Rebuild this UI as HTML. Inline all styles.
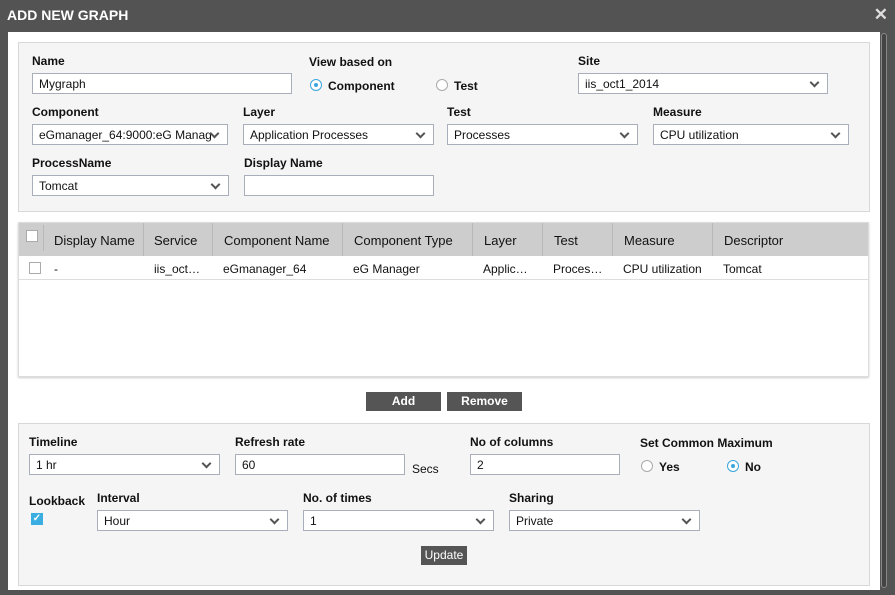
<!DOCTYPE html>
<html><head><meta charset="utf-8">
<style>
*{box-sizing:border-box;margin:0;padding:0}
body{width:895px;height:595px;background:#535353;position:relative;overflow:hidden;font-family:"Liberation Sans",Arial,sans-serif;font-size:12px;color:#111}
.a{position:absolute}
.title{left:7px;top:7px;color:#fff;font-weight:bold;font-size:14px}
.close{right:7px;top:5px;color:#ddd;font-size:17px;font-weight:bold}
.main{left:8px;top:32px;width:872px;height:558px;background:#fff}
.sb{left:881px;top:33px;width:6px;height:555px;background:#444;border:1px solid #888;border-radius:3px}
.panel{background:#f5f5f5;border:1px solid #d8d8d8}
.lbl{font-weight:bold;font-size:12px}
.inp{background:#fff;border:1px solid #a8afbb;height:21px;padding:3px 6px;font-size:12px}
.sel::after{content:"";position:absolute;right:9px;top:5px;width:5px;height:5px;border-right:2px solid #555;border-bottom:2px solid #555;transform:rotate(45deg)}
.radio{width:12px;height:12px;border:1px solid #aaa;border-radius:50%;background:#fff}
.radio.on{border-color:#3aa6dc}
.radio.on::after{content:"";position:absolute;left:3px;top:3px;width:4px;height:4px;border-radius:50%;background:#3aa6dc}
.rl{font-weight:bold}
.tbl{left:18px;top:222px;width:851px;height:155px;border:1px solid #ddd;box-shadow:0 1px 2px #ccc;background:#fff}
.th{top:0;height:33px;background:#cdcdcd;width:100%}
.hc{top:10px;font-size:13px}
.sep{top:0;width:1px;height:33px;background:#b8b8b8}
.rc{top:39px;font-size:12px}
.btn{background:#555;color:#fff;font-weight:bold;text-align:center;font-size:12px}
.cb{width:12px;height:12px;border:1px solid #aaa;background:#fff}
</style></head><body>
<div class="a title">ADD NEW GRAPH</div>
<div class="a close">✕</div>
<div class="a main"></div>
<div class="a sb"></div>

<div class="a panel" style="left:18px;top:42px;width:852px;height:170px"></div>
<div class="a lbl" style="left:32px;top:54px">Name</div>
<div class="a inp" style="left:32px;top:73px;width:260px">Mygraph</div>
<div class="a lbl" style="left:309px;top:55px">View based on</div>
<div class="a radio on" style="left:310px;top:79px"></div><div class="a rl" style="left:328px;top:79px">Component</div>
<div class="a radio" style="left:436px;top:79px"></div><div class="a rl" style="left:454px;top:79px">Test</div>
<div class="a lbl" style="left:578px;top:54px">Site</div>
<div class="a inp sel" style="left:578px;top:73px;width:250px">iis_oct1_2014</div>

<div class="a lbl" style="left:32px;top:105px">Component</div>
<div class="a inp sel" style="left:32px;top:124px;width:196px;overflow:hidden;white-space:nowrap;padding-right:24px">eGmanager_64:9000:eG Manag</div>
<div class="a lbl" style="left:243px;top:105px">Layer</div>
<div class="a inp sel" style="left:243px;top:124px;width:191px">Application Processes</div>
<div class="a lbl" style="left:447px;top:105px">Test</div>
<div class="a inp sel" style="left:447px;top:124px;width:191px">Processes</div>
<div class="a lbl" style="left:653px;top:105px">Measure</div>
<div class="a inp sel" style="left:653px;top:124px;width:196px">CPU utilization</div>

<div class="a lbl" style="left:32px;top:156px">ProcessName</div>
<div class="a inp sel" style="left:32px;top:175px;width:197px">Tomcat</div>
<div class="a lbl" style="left:244px;top:156px">Display Name</div>
<div class="a inp" style="left:244px;top:175px;width:190px"></div>

<div class="a tbl">
 <div class="a th"></div>
 <div class="a cb" style="left:7px;top:7px;width:12px;height:12px"></div>
 <div class="a sep" style="left:24px;top:2px;height:26px"></div>
 <div class="a hc" style="left:35px">Display Name</div>
 <div class="a sep" style="left:124px"></div>
 <div class="a hc" style="left:135px">Service</div>
 <div class="a sep" style="left:193px"></div>
 <div class="a hc" style="left:205px">Component Name</div>
 <div class="a sep" style="left:323px"></div>
 <div class="a hc" style="left:335px">Component Type</div>
 <div class="a sep" style="left:453px"></div>
 <div class="a hc" style="left:465px">Layer</div>
 <div class="a sep" style="left:523px"></div>
 <div class="a hc" style="left:535px">Test</div>
 <div class="a sep" style="left:593px"></div>
 <div class="a hc" style="left:605px">Measure</div>
 <div class="a sep" style="left:693px"></div>
 <div class="a hc" style="left:705px">Descriptor</div>
 <div class="a cb" style="left:10px;top:39px"></div>
 <div class="a rc" style="left:35px">-</div>
 <div class="a rc" style="left:135px">iis_oct…</div>
 <div class="a rc" style="left:204px">eGmanager_64</div>
 <div class="a rc" style="left:334px">eG Manager</div>
 <div class="a rc" style="left:464px">Applic…</div>
 <div class="a rc" style="left:534px">Proces…</div>
 <div class="a rc" style="left:604px">CPU utilization</div>
 <div class="a rc" style="left:704px">Tomcat</div>
 <div class="a" style="left:0;top:56px;width:100%;height:1px;background:#ddd"></div>
</div>

<div class="a btn" style="left:366px;top:392px;width:75px;height:19px;line-height:19px">Add</div>
<div class="a btn" style="left:447px;top:392px;width:75px;height:19px;line-height:19px">Remove</div>

<div class="a panel" style="left:18px;top:423px;width:852px;height:163px"></div>
<div class="a lbl" style="left:29px;top:435px">Timeline</div>
<div class="a inp sel" style="left:29px;top:454px;width:191px">1 hr</div>
<div class="a lbl" style="left:235px;top:435px">Refresh rate</div>
<div class="a inp" style="left:235px;top:454px;width:170px">60</div>
<div class="a" style="left:412px;top:462px">Secs</div>
<div class="a lbl" style="left:470px;top:435px">No of columns</div>
<div class="a inp" style="left:470px;top:454px;width:150px">2</div>
<div class="a lbl" style="left:640px;top:436px">Set Common Maximum</div>
<div class="a radio" style="left:641px;top:460px"></div><div class="a rl" style="left:659px;top:460px">Yes</div>
<div class="a radio on" style="left:727px;top:460px"></div><div class="a rl" style="left:745px;top:460px">No</div>

<div class="a lbl" style="left:29px;top:494px">Lookback</div>
<div class="a" style="left:31px;top:513px;width:12px;height:12px;background:#3aaee0;color:#fff;font-size:10px;line-height:12px;text-align:center;font-weight:bold">✓</div>
<div class="a lbl" style="left:97px;top:491px">Interval</div>
<div class="a inp sel" style="left:97px;top:510px;width:191px">Hour</div>
<div class="a lbl" style="left:303px;top:491px">No. of times</div>
<div class="a inp sel" style="left:303px;top:510px;width:191px">1</div>
<div class="a lbl" style="left:509px;top:491px">Sharing</div>
<div class="a inp sel" style="left:509px;top:510px;width:191px">Private</div>
<div class="a btn" style="left:421px;top:546px;width:46px;height:19px;line-height:19px;font-weight:normal">Update</div>
</body></html>
